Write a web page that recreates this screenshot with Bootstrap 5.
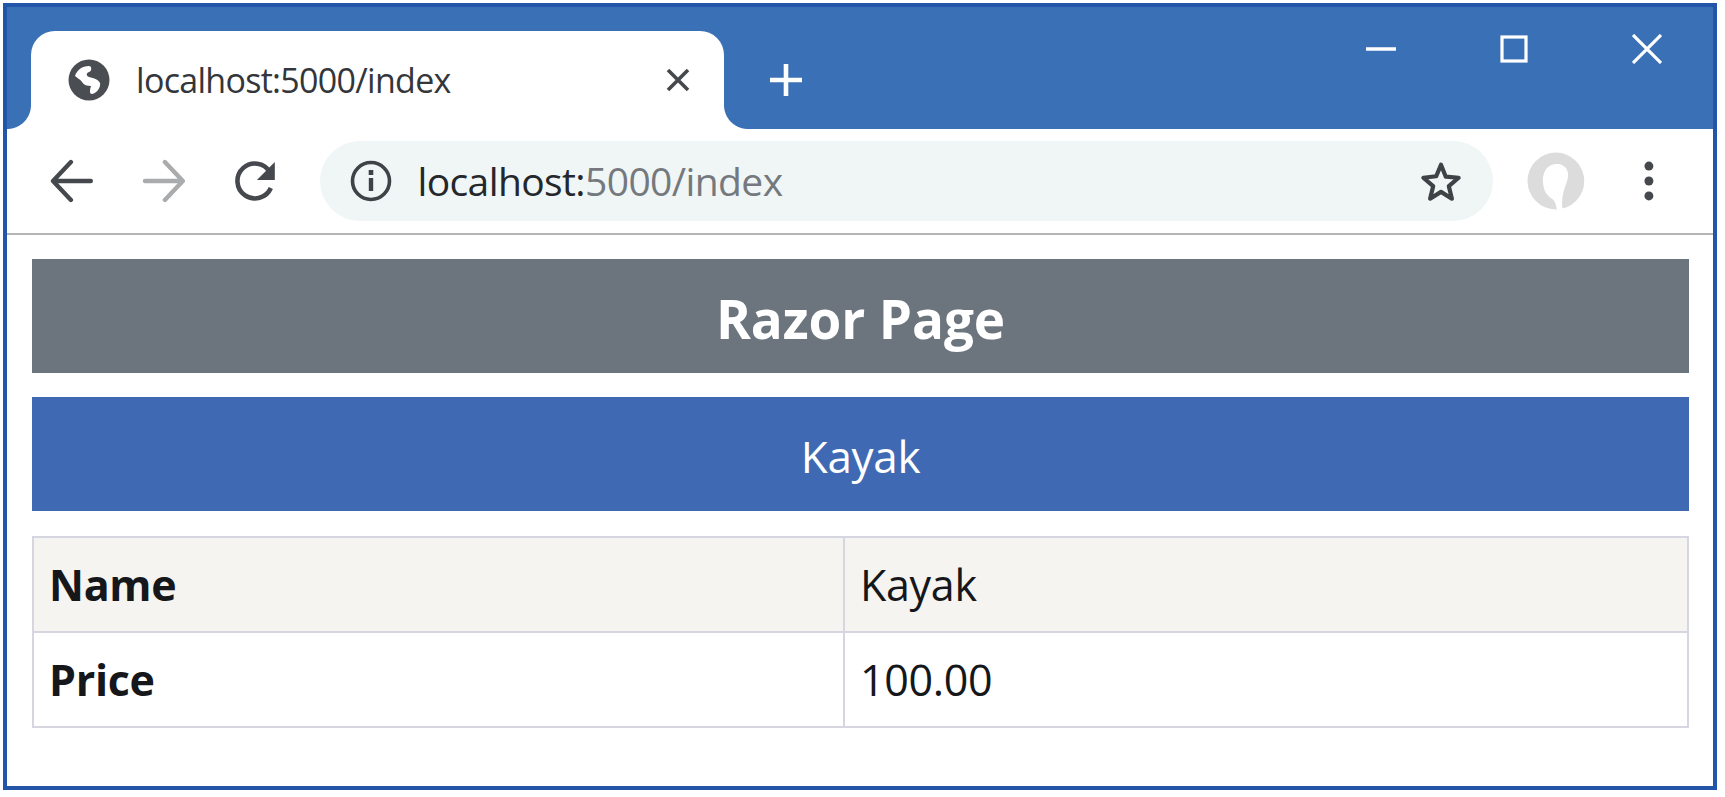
<!DOCTYPE html>
<html lang="en">
  <head>
    <meta charset="UTF-8" />
    <title>localhost:5000/index</title>
    <link href="https://cdn.jsdelivr.net/npm/bootstrap@5.3.0/dist/css/bootstrap.min.css" rel="stylesheet" />
    <style>
      html, body { background: #fff; overflow: hidden; }
      body { font-family: "Open Sans", "Liberation Sans", sans-serif; }
      .win-frame { margin: 3px 0 0 3px; width: 1714px; height: 787px; border: 4px solid #2356a8; }
      .tab-strip { height: 122px; background: #3a70b5; padding: 24px 0 0 24px; }
      .page-tab { position: relative; width: 693px; height: 98px; background: #fff; border-radius: 24px 24px 0 0; padding: 0 33px 0 37px; }
      .page-tab::before, .page-tab::after { content: ""; position: absolute; bottom: 0; width: 24px; height: 24px; }
      .page-tab::before { left: -24px; background: radial-gradient(circle at 0 0, #3a70b5 23.5px, #fff 24.5px); }
      .page-tab::after { right: -24px; background: radial-gradient(circle at 100% 0, #3a70b5 23.5px, #fff 24.5px); }
      .tab-title { font-size: 34px; letter-spacing: -0.7px; color: #33363b; margin-left: 26px; }
      .new-tab { margin: 31px 0 0 44px; }
      .win-btns { margin-left: auto; padding: 3px 51px 0 0; gap: 103px; }
      .tool-bar { height: 106px; border-bottom: 2px solid #b4b5b7; padding: 0 42px 0 43px; }
      .tool-icon { width: 44px; height: 44px; margin-right: 48px; }
      .omni-box { width: 1178px; height: 80px; margin: 0 34px 0 -5px; background: #eff6f5; border-radius: 40px; padding: 0 31px 0 30px; }
      .omni-url { font-size: 39px; letter-spacing: -0.6px; margin-left: 25px; color: #75797e; }
      .omni-host { color: #24272c; }
      .avatar-icon { width: 58px; height: 58px; margin-right: 42px; }
      .page-body { padding: 24px 24px 0 25px; }
      .head-bar { height: 114px; padding-top: 6px; font-size: 53px; font-weight: 700; background: #6c757d; letter-spacing: -0.1px; }
      .product-bar { height: 114px; padding-top: 4px; margin-top: 24px; margin-bottom: 25px; font-size: 44px; background: #3f6ab3; letter-spacing: -0.3px; }
      .detail-table { table-layout: fixed; height: 192px; margin: 0; font-size: 43px; color: #15171a; --bs-table-border-color: #d5d6e0; }
      .detail-table > tbody > tr > * { border-width: 2px; padding: 2px 15px 0; vertical-align: middle; letter-spacing: -0.3px; }
      .detail-table > tbody > tr:first-child > * { background: #f5f4f0; }
      .detail-table th { font-weight: 700; width: 49%; }
    </style>
  </head>
  <body>
    <div class="win-frame">
      <!-- Tab strip -->
      <div class="tab-strip d-flex">
        <div class="page-tab d-flex align-items-center">
          <svg width="42" height="42" viewBox="0 0 42 42">
            <circle cx="21" cy="21" r="20.5" fill="#4a4d52" />
            <path d="M7 17c2-6 7-10 14-10 3 0 3 5 0 6-3 1-3 4 0 5 5 1 10 3 11 6 1 4-3 10-8 11-3 0-2-5-1-8-4 0-7-1-9-4-2-3-5-4-7-6z" fill="#fff" />
          </svg>
          <span class="tab-title flex-grow-1">localhost:5000/index</span>
          <svg width="26" height="26" viewBox="0 0 26 26"><path d="M3 3l20 20M23 3L3 23" stroke="#45484d" stroke-width="3.6" /></svg>
        </div>
        <svg class="new-tab" width="36" height="36" viewBox="0 0 36 36"><path d="M18 2v32M2 18h32" stroke="#fff" stroke-width="4.6" /></svg>
        <div class="win-btns d-flex align-items-start">
          <svg width="30" height="30" viewBox="0 0 30 30"><path d="M0 15h30" stroke="#fff" stroke-width="3.5" /></svg>
          <svg width="30" height="30" viewBox="0 0 30 30"><rect x="3" y="3" width="24" height="24" fill="none" stroke="#fff" stroke-width="3.2" /></svg>
          <svg width="30" height="30" viewBox="0 0 30 30"><path d="M1 1l28 28M29 1L1 29" stroke="#fff" stroke-width="3.2" /></svg>
        </div>
      </div>

      <!-- Toolbar -->
      <div class="tool-bar d-flex align-items-center">
        <svg class="tool-icon" viewBox="0 0 44 44" fill="none" stroke="#45484d" stroke-width="4.4" stroke-linecap="round" stroke-linejoin="round"><path d="M41 22H4M21 3L3 22l18 19" /></svg>
        <svg class="tool-icon" viewBox="0 0 44 44" fill="none" stroke="#a9abad" stroke-width="4.4" stroke-linecap="round" stroke-linejoin="round"><path d="M3 22h37M23 3l18 19-18 19" /></svg>
        <svg class="tool-icon" viewBox="0 0 44 44"><path d="M37 29a17.500 17.500 0 1 1-1-16" fill="none" stroke="#45484d" stroke-width="4.6" /><path d="M41 3v18H23z" fill="#45484d" /></svg>
        <div class="omni-box d-flex align-items-center">
          <svg width="42" height="42" viewBox="0 0 42 42" fill="none" stroke="#3f4247"><circle cx="21" cy="21" r="18.5" stroke-width="3.6" /><path d="M21 18v13" stroke-width="4.4" /><path d="M21 10v5" stroke-width="4.6" /></svg>
          <span class="omni-url flex-grow-1"><span class="omni-host">localhost:</span>5000/index</span>
          <svg width="42" height="42" viewBox="0 0 44 44"><path d="M22 5l5 12.500 13.500 1.100-10.300 8.800 3.200 13.100L22 33.400l-11.400 7.100 3.200-13.100-10.300-8.800L17 17z" fill="none" stroke="#3f4247" stroke-width="4.4" stroke-linejoin="round" /></svg>
        </div>
        <svg class="avatar-icon" viewBox="0 0 58 58">
          <circle cx="29" cy="29" r="28.500" fill="#dcdcdc" />
          <path d="M30 12C21 12 16 19 16 28C16 37 19 43 24 46C27 48 29 50 30 58L36 58C34 50 36 40 40 30C44 20 39 12 30 12Z" fill="#fff" />
        </svg>
        <svg class="tool-icon m-0" viewBox="0 0 44 44" fill="#45484d"><circle cx="22" cy="7" r="4.500" /><circle cx="22" cy="22" r="4.500" /><circle cx="22" cy="37" r="4.500" /></svg>
      </div>

      <!-- Page content -->
      <div class="page-body">
        <div class="head-bar text-white d-flex align-items-center justify-content-center">Razor Page</div>
        <div class="product-bar text-white d-flex align-items-center justify-content-center">Kayak</div>
        <table class="table table-bordered detail-table">
          <tbody>
            <tr><th>Name</th><td>Kayak</td></tr>
            <tr><th>Price</th><td>100.00</td></tr>
          </tbody>
        </table>
      </div>
    </div>
    <script src="https://cdn.jsdelivr.net/npm/bootstrap@5.3.0/dist/js/bootstrap.bundle.min.js"></script>
  </body>
</html>
